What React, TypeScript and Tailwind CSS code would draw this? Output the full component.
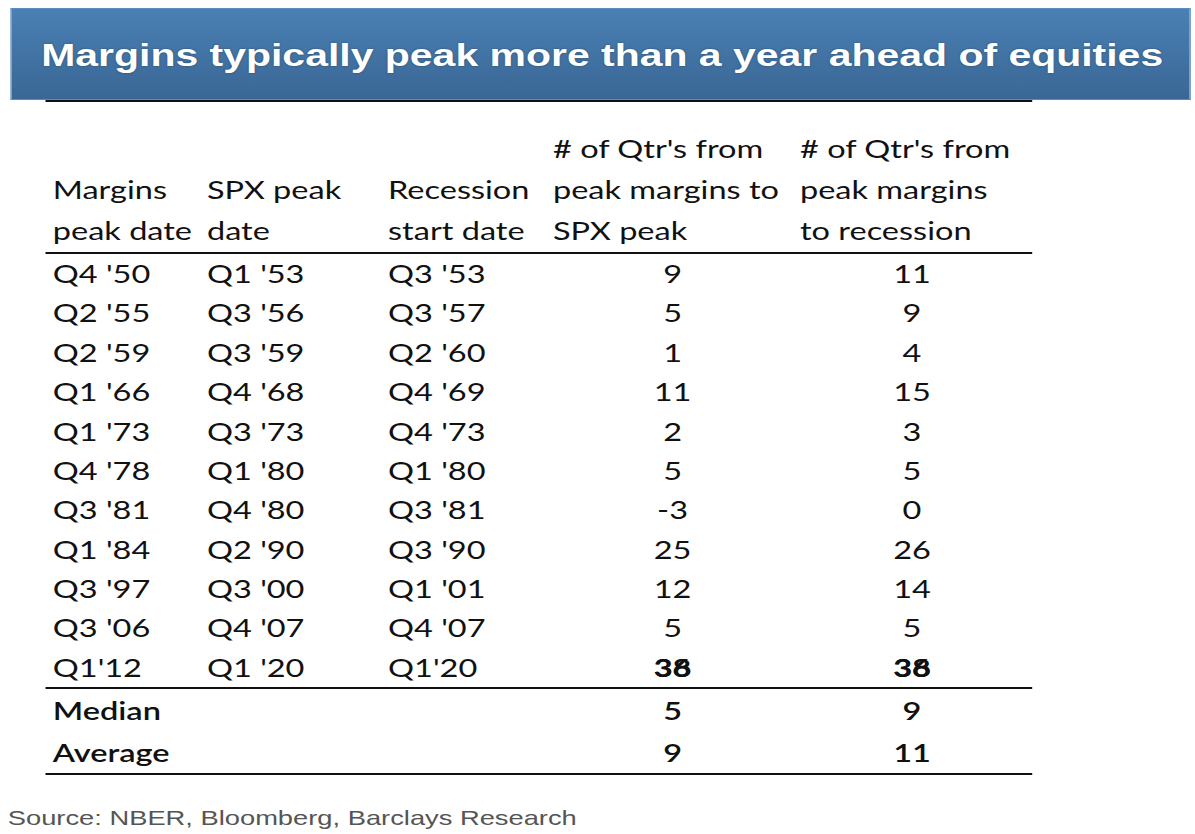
const rows = [
  ["Q4 '50", "Q1 '53", "Q3 '53", "9", "11"],
  ["Q2 '55", "Q3 '56", "Q3 '57", "5", "9"],
  ["Q2 '59", "Q3 '59", "Q2 '60", "1", "4"],
  ["Q1 '66", "Q4 '68", "Q4 '69", "11", "15"],
  ["Q1 '73", "Q3 '73", "Q4 '73", "2", "3"],
  ["Q4 '78", "Q1 '80", "Q1 '80", "5", "5"],
  ["Q3 '81", "Q4 '80", "Q3 '81", "-3", "0"],
  ["Q1 '84", "Q2 '90", "Q3 '90", "25", "26"],
  ["Q3 '97", "Q3 '00", "Q1 '01", "12", "14"],
  ["Q3 '06", "Q4 '07", "Q4 '07", "5", "5"],
]

const cols = "grid grid-cols-[118.6px_139.3px_126.9px_190px_184.4px]"

function Overlap() {
  // two values printed on top of each other in the source
  return (
    <span className="relative inline-block font-bold">
      38
      <span className="absolute left-0 top-0">36</span>
    </span>
  )
}

export default function App() {
  return (
    <div className="h-[834px] w-[1195px] overflow-hidden bg-white">
      <div className="w-[919px] origin-top-left scale-x-[1.3]">
        {/* Title */}
        <div className="pl-[7.7px] pr-[3px] pt-[8px]">
          <div className="flex h-[92px] items-center border border-[#5b8cbd] bg-gradient-to-b from-[#4a80b4] to-[#3a6795] pl-[23px] pt-[4px]">
            <h1 className="font-['Liberation_Sans',Arial,sans-serif] text-[31.5px] font-bold text-white [text-shadow:0_0_2px_rgba(0,0,0,0.35)]">
              Margins typically peak more than a year ahead of equities
            </h1>
          </div>
          <div className="ml-[27px] h-[2px] w-[759px] bg-[#111]" />
        </div>

        {/* Table */}
        <div className="ml-[34.6px] mt-[26px] w-[759px] whitespace-nowrap font-['Lato',sans-serif] text-[25px] text-[#111]">
          <div className={`${cols} pb-[1px] leading-[41px]`}>
            <div className="flex flex-col justify-end px-[6px]">
              <span>Margins</span>
              <span>peak date</span>
            </div>
            <div className="flex flex-col justify-end px-[6px]">
              <span>SPX peak</span>
              <span>date</span>
            </div>
            <div className="flex flex-col justify-end px-[6px]">
              <span>Recession</span>
              <span>start date</span>
            </div>
            <div className="flex flex-col justify-end px-[6px]">
              <span># of Qtr's from</span>
              <span>peak margins to</span>
              <span>SPX peak</span>
            </div>
            <div className="flex flex-col justify-end px-[6px]">
              <span># of Qtr's from</span>
              <span>peak margins</span>
              <span>to recession</span>
            </div>
          </div>
          <div className="h-[2px] bg-[#111]" />

          {rows.map((r) => (
            <div key={r[0]} className={`${cols} h-[39.4px] items-center`}>
              <div className="px-[6px]">{r[0]}</div>
              <div className="px-[6px]">{r[1]}</div>
              <div className="px-[6px]">{r[2]}</div>
              <div className="pl-[6px] text-center">{r[3]}</div>
              <div className="px-[6px] text-center">{r[4]}</div>
            </div>
          ))}
          <div className={`${cols} h-[39.4px] items-center`}>
            <div className="px-[6px]">Q1'12</div>
            <div className="px-[6px]">Q1 '20</div>
            <div className="px-[6px]">Q1'20</div>
            <div className="pl-[6px] text-center">
              <Overlap />
            </div>
            <div className="px-[6px] text-center">
              <Overlap />
            </div>
          </div>
          <div className="h-[2px] bg-[#111]" />

          <div className={`${cols} h-[42px] items-center font-semibold`}>
            <div className="px-[6px]">Median</div>
            <div />
            <div />
            <div className="pl-[6px] text-center">5</div>
            <div className="px-[6px] text-center">9</div>
          </div>
          <div className={`${cols} h-[42px] items-center font-semibold`}>
            <div className="px-[6px]">Average</div>
            <div />
            <div />
            <div className="pl-[6px] text-center">9</div>
            <div className="px-[6px] text-center">11</div>
          </div>
          <div className="h-[2px] bg-[#111]" />
        </div>

        <p className="ml-[6px] mt-[27px] font-['Liberation_Sans',Arial,sans-serif] text-[21px] text-[#555]">
          Source: NBER, Bloomberg, Barclays Research
        </p>
      </div>
    </div>
  )
}
